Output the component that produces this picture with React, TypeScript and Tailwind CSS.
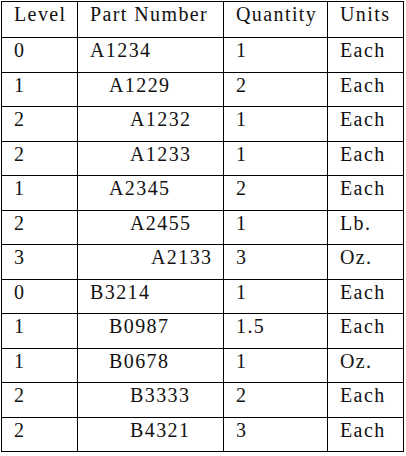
const rows: [number, string, string, string][] = [
  [0, 'A1234', '1', 'Each'],
  [1, 'A1229', '2', 'Each'],
  [2, 'A1232', '1', 'Each'],
  [2, 'A1233', '1', 'Each'],
  [1, 'A2345', '2', 'Each'],
  [2, 'A2455', '1', 'Lb.'],
  [3, 'A2133', '3', 'Oz.'],
  [0, 'B3214', '1', 'Each'],
  [1, 'B0987', '1.5', 'Each'],
  [1, 'B0678', '1', 'Oz.'],
  [2, 'B3333', '2', 'Each'],
  [2, 'B4321', '3', 'Each'],
];

const indent = ['pl-3', 'pl-[31px]', 'pl-[52px]', 'pl-[73px]'];

export default function App() {
  const cell = 'border-r border-b border-black pl-3 pt-px leading-[23px]';
  return (
    <div className="w-[406px] h-[456px] bg-white pt-px pl-px text-[20px] text-[#111] tracking-[0.07em] font-serif">
      <div className="grid grid-cols-[76px_146px_104px_76px] w-[403px] border-l border-t border-black font-[Liberation_Serif,serif]">
        <div className={`${cell} h-[36px] pt-[2px]`}>Level</div>
        <div className={`${cell} h-[36px] pt-[2px]`}>Part Number</div>
        <div className={`${cell} h-[36px] pt-[2px]`}>Quantity</div>
        <div className={`${cell} h-[36px] pt-[2px]`}>Units</div>
        {rows.map(([lvl, part, qty, unit], i) => {
          const h = i % 2 === 0 ? 'h-[35px]' : 'h-[34px]';
          return (
            <div key={i} className="contents">
              <div className={`${cell} ${h}`}>{lvl}</div>
              <div className={`${cell} ${h} ${indent[lvl]}`}>{part}</div>
              <div className={`${cell} ${h}`}>{qty}</div>
              <div className={`${cell} ${h}`}>{unit}</div>
            </div>
          );
        })}
      </div>
    </div>
  );
}
